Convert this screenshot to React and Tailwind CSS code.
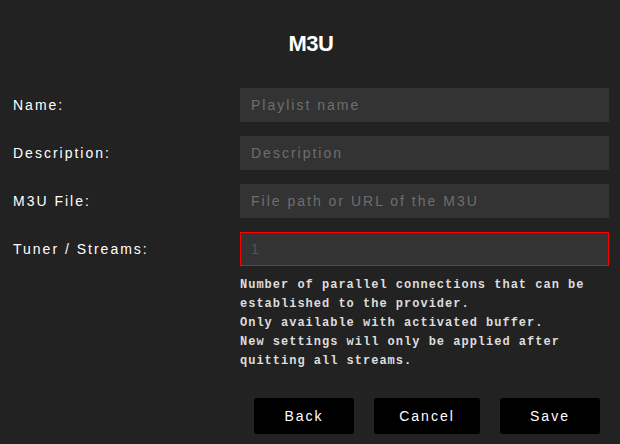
import React from 'react';

const fields = [
  { label: 'Name:', placeholder: 'Playlist name' },
  { label: 'Description:', placeholder: 'Description' },
  { label: 'M3U File:', placeholder: 'File path or URL of the M3U' },
];

const App = () => {
  return (
    <div className="w-[620px] h-[444px] bg-[#222222] text-white overflow-hidden font-['Liberation_Sans',Arial,sans-serif]">
      <h1 className="pt-[31px] h-[88px] text-center text-[22px] font-bold leading-[26px] tracking-[-0.5px] pl-[2px]">M3U</h1>

      <div className="flex flex-col gap-[14px] pl-[13px] pr-[11px]">
        {fields.map((f) => (
          <div key={f.label} className="flex items-center">
            <label className="w-[227px] text-[14px] tracking-[2px]">{f.label}</label>
            <input
              className="flex-1 h-[34px] bg-[#333333] px-[11px] text-[14px] tracking-[2px] text-white placeholder:text-[#6e6e6e] outline-none"
              placeholder={f.placeholder}
            />
          </div>
        ))}
        <div className="flex items-center">
          <label className="w-[227px] text-[14px] tracking-[2px]">Tuner / Streams:</label>
          <input
            className="flex-1 h-[34px] bg-[#333333] border border-[#ff0000] px-[10px] text-[14px] tracking-[2px] text-white placeholder:text-[#555555] outline-none"
            placeholder="1"
          />
        </div>
      </div>

      <p className="ml-[240px] mt-[10px] text-[12px] leading-[19px] font-bold tracking-[1px] text-[#dddddd] font-['Liberation_Mono','Courier_New',monospace]">
        Number of parallel connections that can be
        <br />
        established to the provider.
        <br />
        Only available with activated buffer.
        <br />
        New settings will only be applied after
        <br />
        quitting all streams.
      </p>

      <div className="flex justify-end gap-[20px] pr-[20px] mt-[27px]">
        <button className="w-[100px] h-[36px] bg-black rounded-[3px] text-[14px] tracking-[2px]">Back</button>
        <button className="w-[106px] h-[36px] bg-black rounded-[3px] text-[14px] tracking-[2px]">Cancel</button>
        <button className="w-[100px] h-[36px] bg-black rounded-[3px] text-[14px] tracking-[2px]">Save</button>
      </div>
    </div>
  );
};

export default App;
